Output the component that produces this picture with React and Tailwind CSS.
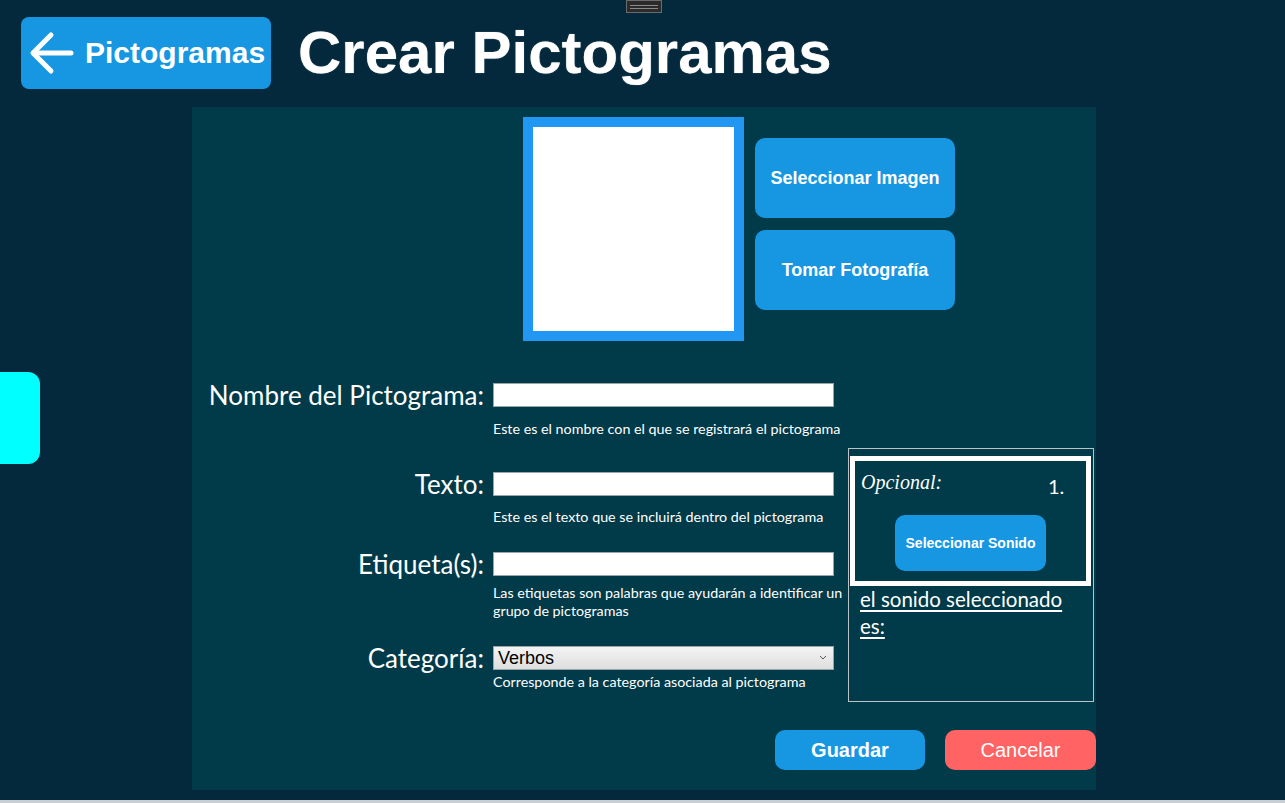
import React from "react";

const hint = "text-[14.3px] leading-[18px] text-white font-['Lato',sans-serif] whitespace-nowrap";
const label = "w-[301px] pr-[9px] text-right text-[26px] leading-[24px] text-white font-['Lato',sans-serif]";
const input = "w-[341px] h-[24px] bg-white border border-[#9aa4a8] block";

function FormRow({ name, mt, hintMt, children, hints }) {
  return (
    <div className="flex flex-col" style={{ marginTop: mt }}>
      <div className="flex items-center">
        <div className={label}>{name}</div>
        {children}
      </div>
      <div className="pl-[301px]" style={{ marginTop: hintMt }}>
        {hints.map((h) => (
          <p key={h} className={hint}>{h}</p>
        ))}
      </div>
    </div>
  );
}

export default function App() {
  return (
    <div className="relative h-[803px] w-[1285px] overflow-hidden bg-[#05293c] font-['Liberation_Sans',Arial,sans-serif]">
      {/* drag handle */}
      <div className="absolute left-[626px] top-0 flex h-[13px] w-[36px] flex-col items-center justify-center gap-[2px] border border-[#6b6b6b] bg-[#2b2b2b]">
        <div className="h-px w-[28px] bg-[#8a8a8a]" />
        <div className="h-px w-[28px] bg-[#8a8a8a]" />
      </div>

      {/* side tab */}
      <div className="absolute left-0 top-[372px] h-[92px] w-[40px] rounded-r-[12px] bg-[#00ffff]" />

      <header className="flex items-center pl-[21px] pt-[17px]">
        <button className="flex h-[72px] w-[250px] items-center gap-[10px] rounded-[8px] bg-[#1796e2] pl-[8px] text-white">
          <svg width="46" height="44" viewBox="0 0 46 44" fill="none" stroke="white" strokeWidth="5" strokeLinecap="round" strokeLinejoin="round">
            <path d="M42 22H5" />
            <path d="M22 4L4 22l18 18" />
          </svg>
          <span className="text-[30px] font-bold leading-none">Pictogramas</span>
        </button>
        <h1 className="ml-[27px] text-[60px] font-bold leading-none text-white [text-shadow:0_0_1px_#9ab]">
          Crear Pictogramas
        </h1>
      </header>

      <main className="ml-[192px] mt-[18px] h-[683px] w-[904px] bg-[#013a49]">
        <div className="flex pl-[331px] pt-[10px]">
          <div className="h-[224px] w-[221px] border-[10px] border-[#2196f3] bg-white" />
          <div className="ml-[11px] mt-[21px] flex flex-col gap-[12px]">
            <button className="h-[80px] w-[200px] rounded-[10px] bg-[#1796e2] text-[18px] font-bold text-white">
              Seleccionar Imagen
            </button>
            <button className="h-[80px] w-[200px] rounded-[10px] bg-[#1796e2] text-[18px] font-bold text-white">
              Tomar Fotografía
            </button>
          </div>
        </div>

        <div className="flex">
          <div className="w-[656px]">
            <FormRow name="Nombre del Pictograma:" mt="42px" hintMt="13px" hints={["Este es el nombre con el que se registrará el pictograma"]}>
              <input className={input} />
            </FormRow>
            <FormRow name="Texto:" mt="34px" hintMt="12px" hints={["Este es el texto que se incluirá dentro del pictograma"]}>
              <input className={input} />
            </FormRow>
            <FormRow name="Etiqueta(s):" mt="26px" hintMt="8px" hints={["Las etiquetas son palabras que ayudarán a identificar un", "grupo de pictogramas"]}>
              <input className={input} />
            </FormRow>
            <FormRow name="Categoría:" mt="26px" hintMt="3px" hints={["Corresponde a la categoría asociada al pictograma"]}>
              <div className="relative flex h-[24px] w-[341px] items-center border border-[#9aa4a8] bg-gradient-to-b from-[#f4f4f4] to-[#dedede] pl-[4px] text-[18px] text-black">
                Verbos
                <svg className="absolute right-[6px] top-[8px]" width="8" height="6" viewBox="0 0 8 6" fill="none" stroke="#555" strokeWidth="1">
                  <path d="M1 1l3 3 3-3" />
                </svg>
              </div>
            </FormRow>
          </div>

          <div className="mt-[107px] h-[254px] w-[246px] border border-[#b9c4c8] pl-[1px] pt-[7px]">
            <div className="relative h-[130px] w-[241px] border-[5px] border-white px-[6px] pt-[6px]">
              <span className="font-['Liberation_Serif',serif] text-[20px] italic text-white">Opcional:</span>
              <span className="absolute left-[193px] top-[10px] font-['Lato',sans-serif] text-[20px] text-white">1.</span>
              <div className="mt-[18px] flex justify-center">
                <button className="h-[56px] w-[151px] rounded-[10px] bg-[#1796e2] text-[14px] font-bold text-white">
                  Seleccionar Sonido
                </button>
              </div>
            </div>
            <p className="ml-[10px] mt-0 w-[215px] font-['Lato',sans-serif] text-[20.5px] leading-[27px] text-white underline underline-offset-[3px]">
              el sonido seleccionado es:
            </p>
          </div>
        </div>

        <div className="mt-[28px] flex justify-end gap-[20px]">
          <button className="h-[40px] w-[150px] rounded-[10px] bg-[#1796e2] text-[20px] font-bold text-white">
            Guardar
          </button>
          <button className="h-[40px] w-[151px] rounded-[10px] bg-[#ff6363] text-[20px] text-white">
            Cancelar
          </button>
        </div>
      </main>

      <div className="absolute bottom-0 left-0 h-[3px] w-full bg-[#c9ced4]" />
    </div>
  );
}
